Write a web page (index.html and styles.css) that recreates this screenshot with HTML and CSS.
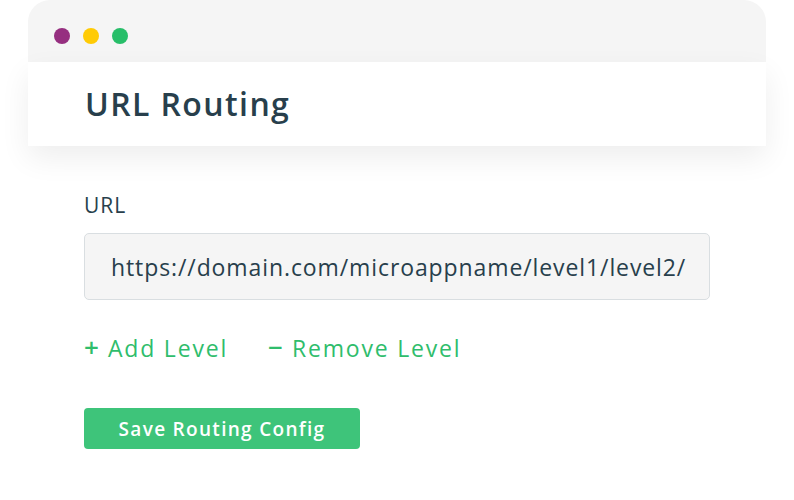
FILE: index.html
```html
<!DOCTYPE html>
<html lang="en">
  <head>
    <meta charset="UTF-8" />
    <meta name="viewport" content="width=device-width, initial-scale=1.0" />
    <title>URL Routing</title>
    <link rel="stylesheet" href="styles.css">
  </head>
  <body>
    <div class="window">
      <div class="titlebar">
        <span class="dot purple"></span>
        <span class="dot yellow"></span>
        <span class="dot green"></span>
      </div>
      <div class="header">
        <h1 class="title">URL Routing</h1>
      </div>
    </div>

    <div class="content">
      <label class="label" for="url">URL</label>
      <div class="url-box" id="url">https://domain.com/microappname/level1/level2/</div>
      <div class="levels">
        <a class="level-link" href="#"><span class="sign">+</span>Add Level</a>
        <a class="level-link" href="#"><span class="sign">−</span>Remove Level</a>
      </div>
      <button class="save-btn">Save Routing Config</button>
    </div>
  </body>
</html>
```

FILE: styles.css
```css
body {
  margin: 0;
  background: #fff;
  font-family: "Open Sans", "DejaVu Sans", sans-serif;
  color: #283f4c;
}
.window {
  margin: 0 28px;
}
.titlebar {
  height: 62px;
  box-sizing: border-box;
  padding: 10px 0 0 26px;
  background: #f5f5f5;
  border-radius: 22px 22px 0 0;
  display: flex;
  align-items: center;
  gap: 13px;
}
.dot {
  width: 16px;
  height: 16px;
  border-radius: 50%;
}
.dot.purple {
  background: #962f80;
}
.dot.yellow {
  background: #ffcb05;
}
.dot.green {
  background: #27be69;
}
.header {
  height: 84px;
  background: #fff;
  display: flex;
  align-items: center;
  padding-left: 57px;
  box-shadow: 0 12px 30px rgba(0, 0, 0, 0.07);
}
.title {
  margin: 0;
  font-size: 32px;
  font-weight: 600;
  line-height: 40px;
  letter-spacing: 1.4px;
}
.content {
  padding: 46px 84px 0;
}
.label {
  display: block;
  font-size: 21px;
  line-height: 26px;
  letter-spacing: 1px;
}
.url-box {
  margin-top: 15px;
  box-sizing: border-box;
  width: 626px;
  height: 67px;
  border: 1px solid #d9dee1;
  border-radius: 5px;
  background: #f5f5f5;
  display: flex;
  align-items: center;
  padding-left: 26px;
  font-size: 23px;
  letter-spacing: 0.9px;
}
.levels {
  margin-top: 33px;
  display: flex;
  gap: 40px;
}
.level-link {
  color: #2fbd6c;
  text-decoration: none;
  font-size: 23px;
  line-height: 30px;
  letter-spacing: 1.8px;
}
.sign {
  display: inline-block;
  width: 24px;
  font-size: 26px;
  font-weight: 600;
  line-height: 1;
  letter-spacing: 0;
}
.save-btn {
  display: block;
  margin-top: 45px;
  width: 276px;
  height: 41px;
  border: none;
  border-radius: 4px;
  background: #3ec47a;
  color: #fff;
  font-family: inherit;
  font-size: 19px;
  font-weight: 600;
  letter-spacing: 1.3px;
  cursor: pointer;
}
```
